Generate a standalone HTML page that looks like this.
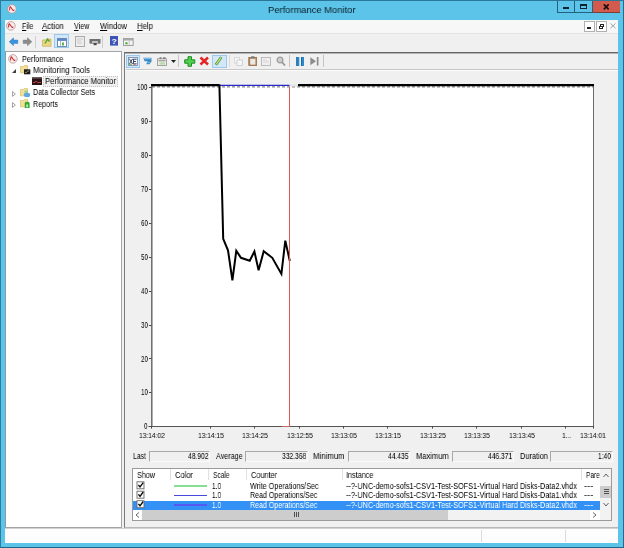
<!DOCTYPE html>
<html><head><meta charset="utf-8"><title>Performance Monitor</title>
<style>
html,body{margin:0;padding:0;}
body{width:624px;height:548px;overflow:hidden;position:relative;background:#5BC4E8;font-family:"Liberation Sans",sans-serif;}
div,span,svg{position:absolute;box-sizing:border-box;}
.t{white-space:pre;transform-origin:0 50%;will-change:transform;}
.t u{text-decoration-thickness:0.6px;text-underline-offset:0.5px;}
#win{left:0;top:0;width:624px;height:548px;background:#5BC4E8;}
#edge{left:0;top:0;width:624px;height:548px;border:1px solid #2B7EA3;border-top-color:#2A7698;border-right-width:1.5px;border-right-color:#1F6D92;border-bottom-color:#1F6688}
#client{left:5px;top:20px;width:613px;height:523px;background:#F0F0F0;}
#menubar{left:5px;top:20px;width:613px;height:13px;background:#F7F7F7;}
#menusep{left:5px;top:33px;width:613px;height:1px;background:#E3E3E3;}
#toolbar{left:5px;top:34px;width:613px;height:18px;background:#F0F0F0;}
#tree{left:5px;top:51px;width:117px;height:477px;background:#fff;border:1px solid #A4A4A4;border-left-color:#8a9aa0;}
#rpanel{left:124px;top:52px;width:494px;height:476px;background:#F0F0F0;border-top:1px solid #666;border-left:1px solid #7A7A7A;border-bottom:1px solid #B8B8B8;}
#rpanel2{left:125px;top:53px;width:493px;height:1px;background:#B4B4B4;}
#itbsep{left:126px;top:69px;width:492px;height:1px;background:#C8C8C8;}
#itbsep2{left:126px;top:70px;width:492px;height:1px;background:#FBFBFB;}
#status{left:5px;top:528px;width:613px;height:14.5px;background:#FDFDFD;border-top:1px solid #D2D2D2;}
.vs{width:1px;background:#DCDCDC;}
.cap{top:1px;height:12.200px;}
.sbox{height:11px;top:451px;border-top:1px solid #A8A8A8;border-left:1px solid #A8A8A8;border-right:1px solid #FAFAFA;border-bottom:1px solid #FAFAFA;background:#F0F0F0;}
#list{left:132px;top:468px;width:480px;height:53px;background:#fff;border:1px solid #9A9A9A;}
.hs{top:469px;height:11px;width:1px;background:#E0E0E0;}
.hl{background:#D2E7F8;border:1px solid #9CC9EE;}
</style></head><body>
<div id="win"></div><div id="edge"></div>
<div id="client"></div>
<div id="menubar"></div><div id="menusep"></div><div id="toolbar"></div>
<div id="tree"></div>
<div id="rpanel"></div><div id="rpanel2"></div><div id="itbsep"></div><div id="itbsep2"></div>
<div id="status"></div>
<div class="vs" style="left:481px;top:530px;height:12px"></div>
<div class="vs" style="left:565px;top:530px;height:12px"></div>
<!-- caption buttons -->
<div class="cap" style="left:557px;width:18px;border-left:1px solid #25607F;border-bottom:1px solid #25607F;border-right:1px solid #25607F"></div>
<div class="cap" style="left:575px;width:17px;border-bottom:1px solid #25607F;"></div>
<div class="cap" style="left:591.500px;width:28px;background:#D35B4E;border-left:1px solid #25607F;border-bottom:1px solid #7a4038"></div>
<div style="left:562.500px;top:7.200px;width:6.500px;height:2.200px;background:#10222E"></div>
<div style="left:580px;top:4.200px;width:6.600px;height:5.200px;border:1.700px solid #10222E;border-top-width:2px;border-bottom-width:1.800px"></div>
<svg style="left:602.500px;top:4px" width="6.500" height="5.600" viewBox="0 0 6.500 5.600"><path d="M0.800 0.300 L5.700 5.300 M5.700 0.300 L0.800 5.300" stroke="#1a1010" stroke-width="1.700" fill="none"/></svg>
<!-- mdi buttons -->
<div style="left:583.500px;top:20.500px;width:11.300px;height:11px;background:#fff;border:1px solid #B0B0B0"></div>
<div style="left:595.500px;top:20.500px;width:11px;height:11px;background:#fff;border:1px solid #B0B0B0"></div>
<div style="left:587.300px;top:27.300px;width:4px;height:1.800px;background:#222"></div>
<div style="left:600px;top:23.600px;width:4.200px;height:3.200px;border:1px solid #222;border-top-width:1.500px"></div>
<div style="left:598.700px;top:25.500px;width:4.200px;height:3.600px;border:1px solid #222;border-top-width:1.500px;background:#fff"></div>
<svg style="left:609.500px;top:23.300px" width="6" height="5.600" viewBox="0 0 6 5.600"><path d="M0.500 0.500 L5.500 5.100 M5.500 0.500 L0.500 5.100" stroke="#9aa8a8" stroke-width="1" fill="none"/></svg>
<!-- stats boxes -->
<div class="sbox" style="left:149px;width:61px"></div>
<div class="sbox" style="left:245px;width:63px"></div>
<div class="sbox" style="left:348px;width:62px"></div>
<div class="sbox" style="left:452px;width:62px"></div>
<div class="sbox" style="left:550px;width:63px"></div>
<!-- list -->
<div id="list"></div>
<div class="hs" style="left:170px"></div><div class="hs" style="left:208px"></div><div class="hs" style="left:246px"></div><div class="hs" style="left:342px"></div><div class="hs" style="left:581px"></div>
<div style="left:133px;top:500.5px;width:467px;height:9px;background:#3391F6"></div>
<!-- hscroll -->
<div style="left:133px;top:510px;width:467px;height:10px;background:#F2F2F2"></div><div style="left:133px;top:510px;width:9px;height:10px;background:#fff"></div><div style="left:590px;top:510px;width:10px;height:10px;background:#fff"></div>
<div style="left:142px;top:510px;width:306px;height:10px;background:#CDCDCD"></div>
<!-- vscroll -->
<div style="left:600px;top:469px;width:11px;height:51px;background:#F2F2F2"></div>
<div style="left:600px;top:485.5px;width:11px;height:12px;background:#CDCDCD"></div>
<!-- app icons (title, menu, tree root) -->
<svg style="left:6.6px;top:4.2px" width="9.800" height="9.800" viewBox="0 0 11 11"><circle cx="5.500" cy="5.500" r="4.800" fill="#FBECEC" stroke="#B89292" stroke-width="0.900"/><path d="M2.800 7.200 L3.200 3.600 Q3.600 2.800 4.300 3.800 L6.600 7 Q7.600 7.800 8 6.400" stroke="#C83030" stroke-width="1.200" fill="none"/></svg>
<svg style="left:6.2px;top:21.2px" width="9.800" height="9.800" viewBox="0 0 11 11"><circle cx="5.500" cy="5.500" r="4.800" fill="#FBECEC" stroke="#B89292" stroke-width="0.900"/><path d="M2.800 7.200 L3.200 3.600 Q3.600 2.800 4.300 3.800 L6.600 7 Q7.600 7.800 8 6.400" stroke="#C83030" stroke-width="1.200" fill="none"/></svg>
<svg style="left:8.2px;top:53.8px" width="9.800" height="9.800" viewBox="0 0 11 11"><circle cx="5.500" cy="5.500" r="4.800" fill="#FBECEC" stroke="#B89292" stroke-width="0.900"/><path d="M2.800 7.200 L3.200 3.600 Q3.600 2.800 4.300 3.800 L6.600 7 Q7.600 7.800 8 6.400" stroke="#C83030" stroke-width="1.200" fill="none"/></svg>
<!-- main toolbar -->
<svg style="left:7.5px;top:36.700px" width="11" height="9.500" viewBox="0 0 12 11"><path d="M1 5.5 L6 1 V3.6 H11 V7.4 H6 V10 Z" fill="#3d93dc" stroke="#2c7cc4" stroke-width="0.6"/></svg>
<svg style="left:21.500px;top:36.700px" width="11" height="9.500" viewBox="0 0 12 11"><path d="M11 5.5 L6 1 V3.6 H1 V7.4 H6 V10 Z" fill="#8c8c8c" stroke="#7a7a7a" stroke-width="0.6"/></svg>
<div class="vs" style="left:35px;top:36px;height:12px;background:#CFCFCF"></div>
<svg style="left:42px;top:37px" width="10" height="10" viewBox="0 0 10 10"><path d="M0.5 3 H3.5 L4.5 2 H9 V9.3 H0.5 Z" fill="#EBD886" stroke="#C9AE55" stroke-width="0.7"/><path d="M3 6.5 L5.5 2.2 L7.5 4.5" fill="none" stroke="#4FA62F" stroke-width="1.4"/></svg>
<div class="hl" style="left:54.200px;top:34.300px;width:15px;height:13.500px"></div>
<svg style="left:56.700px;top:37.500px" width="10" height="9" viewBox="0 0 10 9"><rect x="0.5" y="0.5" width="9" height="8" fill="#fff" stroke="#6F8FB5" stroke-width="1"/><rect x="0.5" y="0.5" width="9" height="2.4" fill="#5B86C4"/><line x1="3.5" y1="3" x2="3.5" y2="8.5" stroke="#8FA5C5" stroke-width="0.8"/><rect x="5" y="4.5" width="2" height="3" fill="#5DB545"/></svg>
<svg style="left:75px;top:36px" width="10" height="11" viewBox="0 0 10 11"><rect x="0.5" y="0.5" width="9" height="10" fill="#EDEDED" stroke="#ABABAB" stroke-width="1"/><path d="M2 3h6M2 5h4M2 7h5" stroke="#C4C4C4" stroke-width="0.8"/></svg>
<svg style="left:89px;top:38px" width="12" height="8" viewBox="0 0 12 8"><rect x="0.5" y="1" width="11" height="4.6" fill="#6E6E6E"/><rect x="3" y="3.2" width="6" height="1.6" fill="#D8D8D8"/><rect x="4.6" y="5" width="3" height="2.2" fill="#4a4a4a"/></svg>
<div class="vs" style="left:102px;top:36px;height:12px;background:#CFCFCF"></div>
<svg style="left:110px;top:36px" width="8" height="9.600" viewBox="0 0 8 10.5" preserveAspectRatio="none"><rect x="0" y="0" width="8" height="10.5" fill="#3C55B4"/><text x="4" y="8.3" font-family="Liberation Sans, sans-serif" font-size="8.500" font-weight="bold" fill="#fff" text-anchor="middle">?</text></svg>
<svg style="left:123px;top:37.800px" width="10.600" height="8" viewBox="0 0 11 8.5" preserveAspectRatio="none"><rect x="0.5" y="0.5" width="10" height="7.5" fill="#F4F4F4" stroke="#9C9C9C" stroke-width="1"/><rect x="0.5" y="0.5" width="10" height="2.2" fill="#A8A8A8"/><line x1="6.500" y1="3" x2="6.500" y2="8" stroke="#B5B5B5" stroke-width="0.8"/><circle cx="3.6" cy="5.500" r="1.300" fill="#5DB545"/></svg>
<!-- tree icons -->
<svg style="left:12px;top:69px" width="4" height="4" viewBox="0 0 4 4"><path d="M4 0 V4 H0 Z" fill="#404040"/></svg>
<svg style="left:12px;top:90.500px" width="4" height="6" viewBox="0 0 4 6"><path d="M0.500 0.600 L3.400 3 L0.500 5.400 Z" fill="#fff" stroke="#8a8a8a" stroke-width="0.800"/></svg>
<svg style="left:12px;top:101.500px" width="4" height="6" viewBox="0 0 4 6"><path d="M0.500 0.600 L3.400 3 L0.500 5.400 Z" fill="#fff" stroke="#8a8a8a" stroke-width="0.800"/></svg>
<svg style="left:20px;top:65px" width="10.500" height="9.500" viewBox="0 0 10.5 9.5"><path d="M0.500 1.500 H3.500 L4.300 0.600 H7.500 V7.800 H0.500 Z" fill="#F3DF9C" stroke="#D9BE6A" stroke-width="0.700"/><rect x="4" y="4.300" width="6.300" height="5" fill="#1a1a1a"/><path d="M5 7.500 h1.500 l1 -1.500 h1.800" stroke="#d8d070" stroke-width="0.600" fill="none"/></svg>
<svg style="left:32px;top:76.500px" width="10" height="8" viewBox="0 0 10 8"><rect x="0" y="0" width="10" height="8" fill="#2a1416"/><rect x="0" y="0" width="10" height="1.600" fill="#6a5a5c"/><path d="M1 5.500 h2 l1 -1.500 l1.500 1.500 h3.500" stroke="#d04848" stroke-width="0.900" fill="none"/></svg>
<svg style="left:20px;top:87.500px" width="10.500" height="9.500" viewBox="0 0 10.5 9.5"><path d="M0.500 1.500 H3.500 L4.300 0.600 H7.500 V7.800 H0.500 Z" fill="#F3DF9C" stroke="#D9BE6A" stroke-width="0.700"/><rect x="4.500" y="2.500" width="3.500" height="3" fill="#9CD08C"/><ellipse cx="7" cy="7" rx="3.200" ry="2.300" fill="#5FA8E0"/></svg>
<svg style="left:20px;top:98.800px" width="10.500" height="9.500" viewBox="0 0 10.5 9.500"><path d="M0.500 1.500 H3.500 L4.300 0.600 H7.500 V7.800 H0.500 Z" fill="#F3DF9C" stroke="#D9BE6A" stroke-width="0.700"/><rect x="5.200" y="3.300" width="4" height="6" rx="0.800" fill="#2FB52F" stroke="#1c8c1c" stroke-width="0.600"/><rect x="6.300" y="5.500" width="1.800" height="2.800" fill="#B8F0B0"/></svg>
<!-- selected tree item -->
<div style="left:43px;top:76px;width:75px;height:10.500px;background:#F0F0F0;border:1px dotted #C4C4C4"></div>
<!-- inner toolbar -->
<div class="hl" style="left:126px;top:54.500px;width:14px;height:13px"></div>
<svg style="left:128px;top:56.500px" width="10" height="9" viewBox="0 0 10 9"><rect x="0.500" y="0.500" width="9" height="8" fill="#F4F8FC" stroke="#6E86A8" stroke-width="0.800"/><path d="M1.300 1.800 L4.600 7 M4.600 1.800 L1.300 7" stroke="#283858" stroke-width="0.900" fill="none"/><path d="M5.500 2 V7 M5.500 2.200 H8.600 M5.500 4.500 H8 M5.500 6.800 H8.600" stroke="#283858" stroke-width="0.900" fill="none"/><rect x="1" y="6.500" width="3" height="1.500" fill="#7CC07C"/><rect x="5.500" y="6.300" width="2" height="1.700" fill="#D07070"/></svg>
<svg style="left:143px;top:57px" width="9" height="7.500" viewBox="0 0 9 7.500"><path d="M0.300 0.800 H8.500 V4.500 L6.500 7.200 H3.200 L4.500 4.200 H1.500 Z" fill="#3C8CC8"/><path d="M1 1.600 H8" stroke="#9ED0EE" stroke-width="0.800"/><path d="M4.500 5.500 H7" stroke="#7FD0E0" stroke-width="0.800"/></svg>
<svg style="left:156.500px;top:56.500px" width="10" height="9" viewBox="0 0 10 9"><rect x="0.500" y="1.800" width="9" height="6.700" fill="#EDEDED" stroke="#9A9A9A" stroke-width="0.900"/><path d="M2.500 1 h2 M6 1 h2.500" stroke="#444" stroke-width="1.200"/><path d="M1.500 3.800 h7" stroke="#7a7a7a" stroke-width="0.900"/><rect x="2.500" y="5.300" width="5.500" height="2.300" fill="#B8DCA8"/></svg>
<svg style="left:171px;top:59.500px" width="5" height="3" viewBox="0 0 5 3"><path d="M0 0 H5 L2.500 3 Z" fill="#222"/></svg>
<div class="vs" style="left:178px;top:55px;height:12px;background:#C4C4C4"></div>
<svg style="left:184px;top:55.500px" width="11.500" height="11" viewBox="0 0 11.5 11"><path d="M4 0.700 H7.500 V3.800 H10.800 V7.200 H7.500 V10.300 H4 V7.200 H0.700 V3.800 H4 Z" fill="#4FD24F" stroke="#228A22" stroke-width="1"/></svg>
<svg style="left:199px;top:56px" width="10.500" height="10" viewBox="0 0 10.5 10"><path d="M1.500 1.500 L9 8.500 M9 1.500 L1.500 8.500" stroke="#E22626" stroke-width="2.500" stroke-linecap="butt" fill="none"/></svg>
<div class="hl" style="left:211.500px;top:54.500px;width:15px;height:13px"></div>
<svg style="left:214px;top:56px" width="10" height="10" viewBox="0 0 10 10"><path d="M1.800 8.800 L7.300 1.200" stroke="#4C9A3A" stroke-width="2.800" fill="none"/><path d="M2.200 8.300 L7 1.600" stroke="#D8E87A" stroke-width="1.100" fill="none"/></svg>
<div class="vs" style="left:229px;top:55px;height:12px;background:#DADADA"></div>
<svg style="left:233.500px;top:56.500px" width="9" height="9" viewBox="0 0 9 9"><rect x="0.500" y="0.500" width="5" height="5.500" fill="#F6F6F6" stroke="#D2D2D2" stroke-width="0.800"/><rect x="3" y="3" width="5.500" height="5.500" fill="#F6F6F6" stroke="#C8C8D0" stroke-width="0.800"/></svg>
<svg style="left:247.500px;top:56px" width="9.500" height="10" viewBox="0 0 9.500 10"><rect x="0.800" y="1.500" width="8" height="8" fill="#B08860" stroke="#94683E" stroke-width="0.800"/><rect x="2.200" y="2.800" width="5.200" height="5.800" fill="#ECE8E2"/><rect x="3" y="0.300" width="3.500" height="2" fill="#7a7a7a"/></svg>
<svg style="left:261px;top:56.500px" width="10" height="9" viewBox="0 0 10 9"><rect x="0.500" y="0.500" width="9" height="8" fill="#EFEFEF" stroke="#B4B4B4" stroke-width="0.900"/><path d="M2 3h4M2 5h6" stroke="#CFCFCF" stroke-width="0.800"/></svg>
<svg style="left:275.500px;top:55.500px" width="10" height="10.500" viewBox="0 0 10 10.500"><circle cx="4" cy="4" r="2.900" fill="#CFCFCF" stroke="#9E9E9E" stroke-width="1.300"/><path d="M6 6.200 L9 9.500" stroke="#9A9A9A" stroke-width="1.800"/></svg>
<div class="vs" style="left:289px;top:55px;height:12px;background:#C4C4C4"></div>
<svg style="left:296px;top:56.500px" width="8.500" height="9" viewBox="0 0 8.500 9"><rect x="0.300" y="0" width="3" height="9" fill="#2E8ACC"/><rect x="5" y="0" width="3" height="9" fill="#2E8ACC"/><rect x="0.300" y="0" width="1" height="9" fill="#1A6CA8"/><rect x="5" y="0" width="1" height="9" fill="#1A6CA8"/></svg>
<svg style="left:310px;top:57px" width="9" height="8.500" viewBox="0 0 9 8.500"><path d="M0.300 0.300 L6 4.250 L0.300 8.200 Z" fill="#8C8C8C"/><rect x="6.800" y="0" width="1.700" height="8.500" fill="#8C8C8C"/></svg>
<div class="vs" style="left:322.500px;top:55px;height:12px;background:#C4C4C4"></div>
<!-- list content -->
<svg style="left:136px;top:481px" width="10" height="28" viewBox="0 0 10 28">
<g transform="translate(0,0)"><rect x="1" y="0.800" width="7" height="7" fill="#fff" stroke="#6a6a6a" stroke-width="0.900"/><path d="M2.400 4 L4 5.900 L7.200 1.600" stroke="#111" stroke-width="1.400" fill="none"/></g>
<g transform="translate(0,9.4)"><rect x="1" y="0.800" width="7" height="7" fill="#fff" stroke="#6a6a6a" stroke-width="0.900"/><path d="M2.400 4 L4 5.900 L7.200 1.600" stroke="#111" stroke-width="1.400" fill="none"/></g>
<g transform="translate(0,18.9)"><rect x="1" y="0.800" width="7" height="7" fill="#fff" stroke="#6a6a6a" stroke-width="0.900"/><path d="M2.400 4 L4 5.900 L7.200 1.600" stroke="#111" stroke-width="1.400" fill="none"/></g></svg>
<div style="left:173.500px;top:485.300px;width:33px;height:1.400px;background:#86DE90"></div>
<div style="left:173.500px;top:494.800px;width:33px;height:1.400px;background:#4848DC"></div>
<div style="left:173.500px;top:504.300px;width:33px;height:1.400px;background:#5858F4"></div>
<!-- scroll arrows -->
<svg style="left:135px;top:512px" width="5" height="6" viewBox="0 0 5 6"><path d="M4 0.500 L1 3 L4 5.500" stroke="#555" stroke-width="0.900" fill="none"/></svg>
<svg style="left:592px;top:512px" width="5" height="6" viewBox="0 0 5 6"><path d="M1 0.500 L4 3 L1 5.500" stroke="#555" stroke-width="0.900" fill="none"/></svg>
<svg style="left:603px;top:473px" width="6" height="5" viewBox="0 0 6 5"><path d="M0.500 4 L3 1 L5.500 4" stroke="#555" stroke-width="0.900" fill="none"/></svg>
<svg style="left:603px;top:501.500px" width="6" height="5" viewBox="0 0 6 5"><path d="M0.500 1 L3 4 L5.500 1" stroke="#555" stroke-width="0.900" fill="none"/></svg>
<svg style="left:603px;top:488px" width="6" height="7" viewBox="0 0 6 7"><path d="M0.500 1.500h5M0.500 3.500h5M0.500 5.500h5" stroke="#505050" stroke-width="1" shape-rendering="crispEdges"/></svg>
<svg style="left:293px;top:512px" width="7" height="5" viewBox="0 0 7 5"><path d="M1.500 0v5M3.500 0v5M5.500 0v5" stroke="#505050" stroke-width="1" shape-rendering="crispEdges"/></svg>

<svg style="left:0;top:0" width="624" height="548" viewBox="0 0 624 548">
<rect x="151" y="86.300" width="443" height="340.700" fill="#fff"/>
<line x1="151.8" y1="84" x2="151.8" y2="427" stroke="#6a6a6a" stroke-width="1.5"/>
<line x1="151" y1="426.500" x2="594" y2="426.500" stroke="#555" stroke-width="1.200"/>
<line x1="593.500" y1="85" x2="593.500" y2="427" stroke="#6a6a6a" stroke-width="1"/>
<line x1="152" y1="86.900" x2="593" y2="86.900" stroke="#6a6a6a" stroke-width="1" stroke-dasharray="3 2"/>
<g stroke="#4a4a4a" stroke-width="1">
<path d="M149 87.500h2.500M149 121.500h2.500M149 155.500h2.500M149 189.500h2.500M149 223.500h2.500M149 257.500h2.500M149 291.500h2.500M149 325.500h2.500M149 358.500h2.500M149 392.500h2.500M148.500 426.500h3"/>
<path d="M151.5 426v2.6 M210.5 426v2.6 M254.5 426v2.6 M299.5 426v2.6 M343.5 426v2.6 M387.5 426v2.6 M432.5 426v2.6 M476.5 426v2.6 M521.5 426v2.6 M565.5 426v2.6 M593.5 426v2.6"/>
</g>
<line x1="219" y1="85.300" x2="289.500" y2="85.300" stroke="#2a2ac8" stroke-width="1.300"/>
<line x1="290" y1="85.500" x2="298" y2="85.500" stroke="#e4e4e4" stroke-width="2"/>
<path d="M151 85.200 H219.500" stroke="#000" stroke-width="2.200" fill="none"/>
<path d="M298 85.200 H594" stroke="#000" stroke-width="2.200" fill="none"/>
<polyline points="219.400,84.500 223.200,238.800 228,250.300 232.400,280.300 236.300,250.800 241,257.800 249.700,260.700 254.400,251.500 258.600,270.300 263.700,251.300 272.300,257.800 281.400,273.900 285.300,240.600 289.800,261" stroke="#000" stroke-width="2" fill="none" stroke-linejoin="miter"/>
<line x1="282" y1="426.500" x2="290" y2="426.500" stroke="#c86464" stroke-width="1"/>
<line x1="289.500" y1="87" x2="289.500" y2="426" stroke="#e05858" stroke-width="1"/>
</svg>

<span class="t" style="left:268.00px;top:3.54px;font-size:9.6px;line-height:11.52px;color:#0c1c28;transform:scaleX(0.9768)">Performance Monitor</span>
<span class="t" style="left:21.50px;top:21.20px;font-size:8.5px;line-height:10.2px;color:#000;transform:scaleX(0.8246)"><u>F</u>ile</span>
<span class="t" style="left:42.30px;top:21.20px;font-size:8.5px;line-height:10.2px;color:#000;transform:scaleX(0.9185)"><u>A</u>ction</span>
<span class="t" style="left:74.40px;top:21.20px;font-size:8.5px;line-height:10.2px;color:#000;transform:scaleX(0.8369)"><u>V</u>iew</span>
<span class="t" style="left:100.00px;top:21.20px;font-size:8.5px;line-height:10.2px;color:#000;transform:scaleX(0.8930)"><u>W</u>indow</span>
<span class="t" style="left:137.00px;top:21.20px;font-size:8.5px;line-height:10.2px;color:#000;transform:scaleX(0.9151)"><u>H</u>elp</span>
<span class="t" style="left:21.50px;top:53.50px;font-size:8.5px;line-height:10.2px;color:#000;transform:scaleX(0.8485)">Performance</span>
<span class="t" style="left:33.00px;top:64.70px;font-size:8.5px;line-height:10.2px;color:#000;transform:scaleX(0.9231)">Monitoring Tools</span>
<span class="t" style="left:45.00px;top:76.00px;font-size:8.5px;line-height:10.2px;color:#000;transform:scaleX(0.8945)">Performance Monitor</span>
<span class="t" style="left:33.00px;top:87.40px;font-size:8.5px;line-height:10.2px;color:#000;transform:scaleX(0.8466)">Data Collector Sets</span>
<span class="t" style="left:33.00px;top:98.60px;font-size:8.5px;line-height:10.2px;color:#000;transform:scaleX(0.8399)">Reports</span>
<span class="t" style="left:137.41px;top:83.38px;font-size:8.2px;line-height:9.84px;color:#000;transform:scaleX(0.7600)">100</span>
<span class="t" style="left:140.88px;top:117.28px;font-size:8.2px;line-height:9.84px;color:#000;transform:scaleX(0.7600)">90</span>
<span class="t" style="left:140.88px;top:151.18px;font-size:8.2px;line-height:9.84px;color:#000;transform:scaleX(0.7600)">80</span>
<span class="t" style="left:140.88px;top:185.08px;font-size:8.2px;line-height:9.84px;color:#000;transform:scaleX(0.7600)">70</span>
<span class="t" style="left:140.88px;top:218.98px;font-size:8.2px;line-height:9.84px;color:#000;transform:scaleX(0.7600)">60</span>
<span class="t" style="left:140.88px;top:252.88px;font-size:8.2px;line-height:9.84px;color:#000;transform:scaleX(0.7600)">50</span>
<span class="t" style="left:140.88px;top:286.78px;font-size:8.2px;line-height:9.84px;color:#000;transform:scaleX(0.7600)">40</span>
<span class="t" style="left:140.88px;top:320.68px;font-size:8.2px;line-height:9.84px;color:#000;transform:scaleX(0.7600)">30</span>
<span class="t" style="left:140.88px;top:354.58px;font-size:8.2px;line-height:9.84px;color:#000;transform:scaleX(0.7600)">20</span>
<span class="t" style="left:140.88px;top:388.48px;font-size:8.2px;line-height:9.84px;color:#000;transform:scaleX(0.7600)">10</span>
<span class="t" style="left:144.33px;top:422.38px;font-size:8.2px;line-height:9.84px;color:#000;transform:scaleX(0.7600)">0</span>
<span class="t" style="left:138.90px;top:430.60px;font-size:8px;line-height:9.6px;color:#000;transform:scaleX(0.8285)">13:14:02</span>
<span class="t" style="left:197.60px;top:430.60px;font-size:8px;line-height:9.6px;color:#000;transform:scaleX(0.8285)">13:14:15</span>
<span class="t" style="left:241.60px;top:430.60px;font-size:8px;line-height:9.6px;color:#000;transform:scaleX(0.8285)">13:14:25</span>
<span class="t" style="left:286.60px;top:430.60px;font-size:8px;line-height:9.6px;color:#000;transform:scaleX(0.8285)">13:12:55</span>
<span class="t" style="left:331.10px;top:430.60px;font-size:8px;line-height:9.6px;color:#000;transform:scaleX(0.8285)">13:13:05</span>
<span class="t" style="left:375.10px;top:430.60px;font-size:8px;line-height:9.6px;color:#000;transform:scaleX(0.8285)">13:13:15</span>
<span class="t" style="left:419.60px;top:430.60px;font-size:8px;line-height:9.6px;color:#000;transform:scaleX(0.8285)">13:13:25</span>
<span class="t" style="left:464.10px;top:430.60px;font-size:8px;line-height:9.6px;color:#000;transform:scaleX(0.8285)">13:13:35</span>
<span class="t" style="left:508.60px;top:430.60px;font-size:8px;line-height:9.6px;color:#000;transform:scaleX(0.8285)">13:13:45</span>
<span class="t" style="left:579.60px;top:430.60px;font-size:8px;line-height:9.6px;color:#000;transform:scaleX(0.8285)">13:14:01</span>
<span class="t" style="left:561.80px;top:430.60px;font-size:8px;line-height:9.6px;color:#000;transform:scaleX(0.8270)">1...</span>
<span class="t" style="left:132.80px;top:451.22px;font-size:8.8px;line-height:10.56px;color:#000;transform:scaleX(0.7692)">Last</span>
<span class="t" style="left:187.55px;top:451.22px;font-size:8.8px;line-height:10.56px;color:#000;transform:scaleX(0.7600)">48.902</span>
<span class="t" style="left:216.00px;top:451.22px;font-size:8.8px;line-height:10.56px;color:#000;transform:scaleX(0.8188)">Average</span>
<span class="t" style="left:282.12px;top:451.22px;font-size:8.8px;line-height:10.56px;color:#000;transform:scaleX(0.7600)">332.368</span>
<span class="t" style="left:313.30px;top:451.22px;font-size:8.8px;line-height:10.56px;color:#000;transform:scaleX(0.8855)">Minimum</span>
<span class="t" style="left:387.55px;top:451.22px;font-size:8.8px;line-height:10.56px;color:#000;transform:scaleX(0.7600)">44.435</span>
<span class="t" style="left:416.00px;top:451.22px;font-size:8.8px;line-height:10.56px;color:#000;transform:scaleX(0.8577)">Maximum</span>
<span class="t" style="left:487.62px;top:451.22px;font-size:8.8px;line-height:10.56px;color:#000;transform:scaleX(0.7600)">446.371</span>
<span class="t" style="left:519.60px;top:451.22px;font-size:8.8px;line-height:10.56px;color:#000;transform:scaleX(0.8387)">Duration</span>
<span class="t" style="left:597.59px;top:451.22px;font-size:8.8px;line-height:10.56px;color:#000;transform:scaleX(0.7600)">1:40</span>
<span class="t" style="left:136.80px;top:470.22px;font-size:9.3px;line-height:11.16px;color:#000;transform:scaleX(0.7737)">Show</span>
<span class="t" style="left:174.80px;top:470.22px;font-size:9.3px;line-height:11.16px;color:#000;transform:scaleX(0.8056)">Color</span>
<span class="t" style="left:212.50px;top:470.22px;font-size:9.3px;line-height:11.16px;color:#000;transform:scaleX(0.7092)">Scale</span>
<span class="t" style="left:251.00px;top:470.22px;font-size:9.3px;line-height:11.16px;color:#000;transform:scaleX(0.7860)">Counter</span>
<span class="t" style="left:346.30px;top:470.22px;font-size:9.3px;line-height:11.16px;color:#000;transform:scaleX(0.7794)">Instance</span>
<span class="t" style="left:585.80px;top:470.22px;font-size:9.3px;line-height:11.16px;color:#000;transform:scaleX(0.7026)">Pare</span>
<span class="t" style="left:212.30px;top:480.62px;font-size:9.3px;line-height:11.16px;color:#000;transform:scaleX(0.7111)">1.0</span>
<span class="t" style="left:250.00px;top:480.62px;font-size:9.3px;line-height:11.16px;color:#000;transform:scaleX(0.7779)">Write Operations/Sec</span>
<span class="t" style="left:346.30px;top:480.62px;font-size:9.3px;line-height:11.16px;color:#000;transform:scaleX(0.7832)">--?-UNC-demo-sofs1-CSV1-Test-SOFS1-Virtual Hard Disks-Data2.vhdx</span>
<span class="t" style="left:584.00px;top:480.62px;font-size:9.3px;line-height:11.16px;color:#000;transform:scaleX(0.9681)">---</span>
<span class="t" style="left:212.30px;top:490.22px;font-size:9.3px;line-height:11.16px;color:#000;transform:scaleX(0.7111)">1.0</span>
<span class="t" style="left:250.00px;top:490.22px;font-size:9.3px;line-height:11.16px;color:#000;transform:scaleX(0.7571)">Read Operations/Sec</span>
<span class="t" style="left:346.30px;top:490.22px;font-size:9.3px;line-height:11.16px;color:#000;transform:scaleX(0.7832)">--?-UNC-demo-sofs1-CSV1-Test-SOFS1-Virtual Hard Disks-Data1.vhdx</span>
<span class="t" style="left:584.00px;top:490.22px;font-size:9.3px;line-height:11.16px;color:#000;transform:scaleX(0.9681)">---</span>
<span class="t" style="left:212.30px;top:499.72px;font-size:9.3px;line-height:11.16px;color:#fff;transform:scaleX(0.7111)">1.0</span>
<span class="t" style="left:250.00px;top:499.72px;font-size:9.3px;line-height:11.16px;color:#fff;transform:scaleX(0.7571)">Read Operations/Sec</span>
<span class="t" style="left:346.30px;top:499.72px;font-size:9.3px;line-height:11.16px;color:#fff;transform:scaleX(0.7832)">--?-UNC-demo-sofs1-CSV1-Test-SOFS1-Virtual Hard Disks-Data2.vhdx</span>
<span class="t" style="left:584.00px;top:499.72px;font-size:9.3px;line-height:11.16px;color:#fff;transform:scaleX(0.9681)">---</span>
</body></html>
